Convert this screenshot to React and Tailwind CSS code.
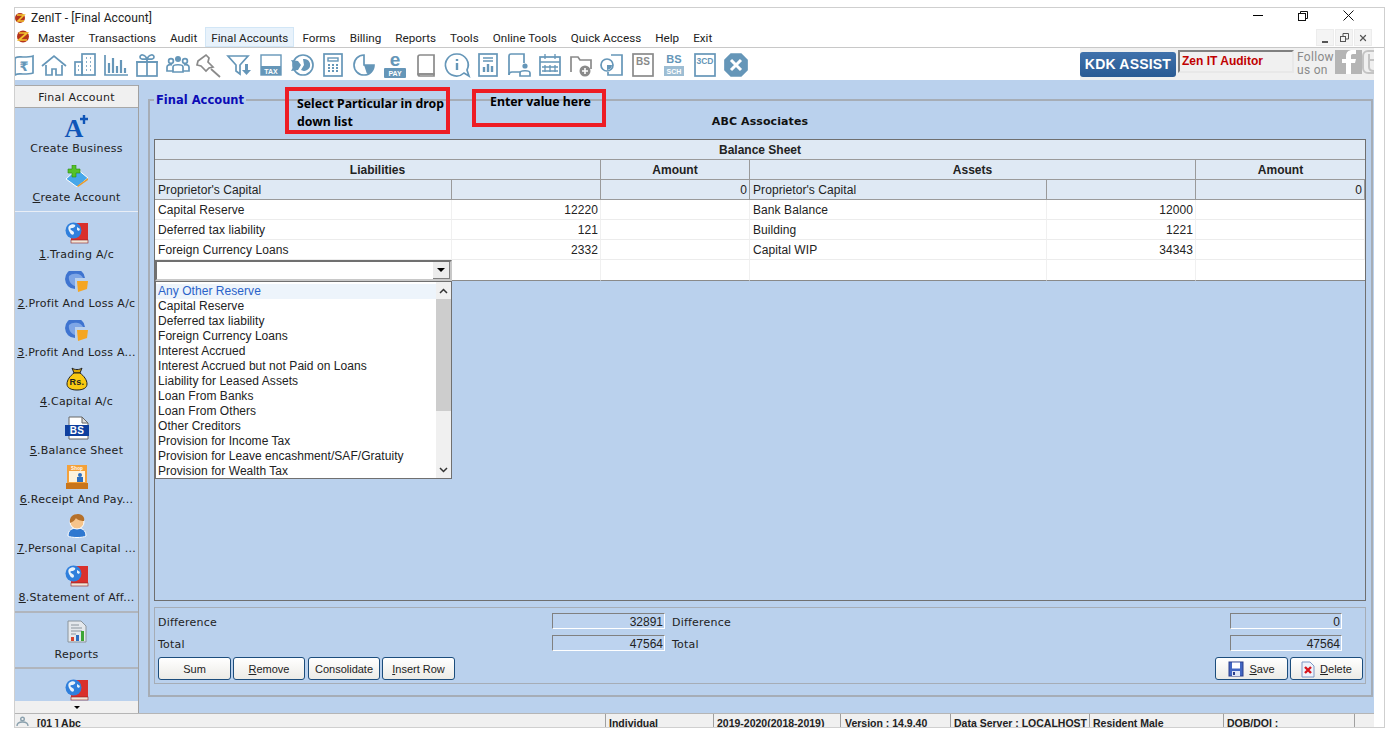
import { X } from "lucide-react";

const ICON = "#6596b8";
const GRAY = "#8a8a8a";

// toolbar icons, all drawn on a 28x28 box
function Tool({ children }) {
  return (
    <div className="w-[31px] h-[30px] flex items-center justify-center shrink-0">
      <svg className="overflow-visible" width="28" height="28" viewBox="0 0 28 28" fill="none" stroke={ICON} strokeWidth="1.700">
        {children}
      </svg>
    </div>
  );
}

const toolIcons = [
  <Tool key="note">
    <path d="M6 7c3-2 5-1 8-1s7 0 10-1v17c-3 1-7 1-10 1s-5-1-8 1z" />
    <text x="15" y="20" fontSize="13" fontWeight="700" textAnchor="middle" fill={ICON} stroke="none" fontFamily="DejaVu Sans">₹</text>
  </Tool>,
  <Tool key="home">
    <path d="M2 15 14 5l12 10" />
    <path d="M6 14v10h6v-6h4v6h6V14" />
  </Tool>,
  <Tool key="building">
    <rect x="11" y="3" width="13" height="21" />
    <rect x="4" y="11" width="7" height="13" />
    <path d="M15 7h1M19 7h1M15 11h1M19 11h1M15 15h1M19 15h1M15 19h1M19 19h1M7 15h1M7 19h1" />
  </Tool>,
  <Tool key="bars">
    <path d="M3 4v20h23" />
    <path d="M7 12v10M11 7v15M15 15v7M19 9v13M23 17v5" strokeWidth="2.200" />
  </Tool>,
  <Tool key="gift">
    <rect x="4" y="11" width="20" height="14" />
    <path d="M3 11h22M14 6v19" />
    <path d="M14 8c-2-5-7-5-7-2s4 2 7 2c3 0 7 1 7-2s-5-3-7 2z" />
  </Tool>,
  <Tool key="people">
    <circle cx="14" cy="8" r="3" fill={ICON} stroke="none" />
    <circle cx="7" cy="10" r="2.400" />
    <circle cx="21" cy="10" r="2.400" />
    <path d="M9 21v-5c0-3 10-3 10 0v5z" />
    <path d="M9 20H3v-4c0-2 3-3 5-2M19 20h6v-4c0-2-3-3-5-2" />
  </Tool>,
  <Tool key="pin">
    <g stroke={GRAY}>
      <path d="M3 10 11 4l3 3-1 4 5 5-4 1-3 3-5-5-4-1z" />
      <path d="m16 18 9 8" />
    </g>
  </Tool>,
  <Tool key="filter">
    <path d="M2 5h20l-8 9v9l-4-3v-6z" />
    <path d="M16 19h9l-4.500 5z" fill={ICON} stroke="none" />
    <path d="M20.500 13v7" strokeWidth="3" />
  </Tool>,
  <Tool key="tax">
    <rect x="4" y="4" width="20" height="20" strokeWidth="1.400" />
    <rect x="4" y="15" width="20" height="9" fill={ICON} stroke="none" />
    <text x="14" y="23" fontSize="7" fontWeight="700" textAnchor="middle" fill="#fff" stroke="none" fontFamily="Liberation Sans">TAX</text>
  </Tool>,
  <Tool key="piearrow">
    <circle cx="15" cy="14" r="10" />
    <path d="M3 9l7 1 3 4-3 5-7 1 3-5.500z" fill={ICON} stroke="none" />
    <path d="M15 8a6 6 0 1 1-2 11l3-5z" fill={ICON} stroke="none" />
  </Tool>,
  <Tool key="calc">
    <rect x="5" y="3" width="18" height="22" />
    <rect x="9" y="7" width="10" height="3" strokeWidth="1.400" />
    <path d="M9 14h2M13 14h2M17 14h2M9 17h2M13 17h2M17 17h2M9 20h2M13 20h2M17 20h2" strokeWidth="1.800" />
  </Tool>,
  <Tool key="pie">
    <path d="M14 4a10 10 0 1 0 10 10H14z" />
    <path d="M14 14h10A10 10 0 0 1 17 23z" fill={ICON} stroke="none" />
  </Tool>,
  <Tool key="epay">
    <text x="14" y="15" fontSize="19" fontWeight="700" textAnchor="middle" fill={ICON} stroke="none" fontFamily="Liberation Sans">e</text>
    <rect x="3" y="17" width="22" height="10" rx="1" fill={ICON} stroke="none" />
    <text x="14" y="25" fontSize="7" fontWeight="700" textAnchor="middle" fill="#fff" stroke="none" fontFamily="Liberation Sans">PAY</text>
  </Tool>,
  <Tool key="book">
    <g stroke={GRAY}>
      <path d="M6 23V6c0-1 1-2 2-2h14v19z" />
      <path d="M6 23c0 2 1 2 2 2h14v-2z" />
    </g>
  </Tool>,
  <Tool key="info">
    <path d="M14 3a11 11 0 1 0 7 19l5 3-2-6a11 11 0 0 0-10-16z" />
    <path d="M14 8v2M14 12v7" strokeWidth="2.400" />
  </Tool>,
  <Tool key="report">
    <rect x="5" y="3" width="18" height="22" />
    <path d="M9 7h10M9 10h10" strokeWidth="1.400" />
    <path d="M10 21v-5M14 21v-8M18 21v-6" strokeWidth="2.400" />
  </Tool>,
  <Tool key="bookuser">
    <path d="M4 24V5c0-1 1-2 2-2h13v9" />
    <path d="M4 24c0-3 2-3 3-3h8" />
    <circle cx="20" cy="15" r="2.600" fill={ICON} stroke="none" />
    <path d="M15 25v-3c0-3 10-3 10 0v3z" />
  </Tool>,
  <Tool key="calendar">
    <rect x="4" y="6" width="20" height="18" />
    <path d="M4 11h20M9 3v5M19 3v5M9 14v7M14 14v7M19 14v7M6 16h16M6 20h16" strokeWidth="1.300" />
  </Tool>,
  <Tool key="folder">
    <g stroke={GRAY}>
      <path d="M4 21V6h7l2 3h11v9" />
    </g>
    <circle cx="18" cy="20" r="5.500" fill={GRAY} stroke="none" />
    <path d="M18 17v6M15 20h6" stroke="#fff" strokeWidth="1.600" />
  </Tool>,
  <Tool key="docpie">
    <path d="M13 4h11v20H10v-3" />
    <circle cx="9" cy="14" r="6" />
    <path d="M9 14h5a5 5 0 0 1-5 5z" fill={ICON} stroke="none" />
  </Tool>,
  <Tool key="bs">
    <rect x="4" y="3" width="20" height="22" stroke={GRAY} />
    <text x="14" y="14" fontSize="10" fontWeight="700" textAnchor="middle" fill={GRAY} stroke="none" fontFamily="Liberation Sans">BS</text>
  </Tool>,
  <Tool key="bssch">
    <text x="14" y="12" fontSize="11" fontWeight="700" textAnchor="middle" fill={ICON} stroke="none" fontFamily="Liberation Sans">BS</text>
    <rect x="4" y="15" width="20" height="10" fill="#9dbdd3" stroke="none" />
    <text x="14" y="23" fontSize="7" fontWeight="700" textAnchor="middle" fill="#fff" stroke="none" fontFamily="Liberation Sans">SCH</text>
  </Tool>,
  <Tool key="tcd">
    <rect x="4" y="3" width="20" height="22" />
    <text x="14" y="13" fontSize="8.500" fontWeight="700" textAnchor="middle" fill={ICON} stroke="none" fontFamily="Liberation Sans">3CD</text>
  </Tool>,
  <Tool key="close">
    <path d="M9 3h10l6 6v10l-6 6H9l-6-6V9z" fill={ICON} stroke={ICON} />
    <path d="m9 9 10 10M19 9 9 19" stroke="#fff" strokeWidth="3" />
  </Tool>,
];

function GlobeBook() {
  return (
    <svg width="24" height="22" viewBox="0 0 24 22">
      <rect x="6" y="1" width="17" height="18" fill="#d9302c" />
      <rect x="6" y="18" width="17" height="3" fill="#f2e6d8" stroke="#8c2020" strokeWidth="0.600" />
      <circle cx="8.500" cy="8.500" r="8" fill="#2f7fdc" />
      <path d="M4 4c2-2 5-2 6-1s-1 3-3 3-2 1-1 2 3 1 3 3-2 2-3 1-4-6-2-8zM12 5l3 2-1 2-2-1z" fill="#e8f2fb" />
    </svg>
  );
}

function PieIcon() {
  return (
    <svg width="24" height="22" viewBox="0 0 24 22">
      <path d="M20 7A10 10 0 1 0 10 18V7z" fill="#3f74d0" />
      <path d="M4 5a8 6 0 0 1 14 2H10v8C6 14 3 9 4 5z" fill="#7ea6e6" />
      <path d="M12 10h11l-1 8-9 3z" fill="#f5a623" />
    </svg>
  );
}

function BagIcon() {
  return (
    <svg className="overflow-visible" width="24" height="24" viewBox="0 0 24 24">
      <path d="M7 1c2 2 8 2 10 0l-2 5H9z" fill="#e0a800" stroke="#222" />
      <path d="M9 6h6c4 3 7 7 7 11 0 4-4 6-10 6S2 21 2 17c0-4 3-8 7-11z" fill="#f9c913" stroke="#222" />
      <text x="12" y="18" fontSize="9" fontWeight="700" textAnchor="middle" fill="#222" fontFamily="Liberation Sans">Rs.</text>
    </svg>
  );
}

function BsIcon() {
  return (
    <svg className="overflow-visible" width="24" height="24" viewBox="0 0 24 24">
      <path d="M4 1h13l6 6v16H4z" fill="#fff" stroke="#666" />
      <path d="M17 1v6h6z" fill="#ddd" stroke="#666" />
      <rect x="0" y="9" width="24" height="11" fill="#0f3f9e" />
      <text x="12" y="18" fontSize="10" fontWeight="700" textAnchor="middle" fill="#fff" fontFamily="Liberation Sans">BS</text>
    </svg>
  );
}

function ShopIcon() {
  return (
    <svg className="overflow-visible" width="22" height="24" viewBox="0 0 22 24">
      <rect x="1" y="0" width="20" height="24" fill="#f4a13a" />
      <rect x="3" y="6" width="16" height="11" fill="#fdf2dc" />
      <rect x="0" y="18" width="22" height="6" fill="#c9751a" />
      <text x="11" y="4.500" fontSize="4.500" fontWeight="700" textAnchor="middle" fill="#fff" fontFamily="Liberation Sans">Shop</text>
      <circle cx="14" cy="10" r="2" fill="#2d6fc0" />
      <rect x="11" y="12" width="6" height="5" fill="#2d6fc0" />
    </svg>
  );
}

function UserIcon() {
  return (
    <svg width="20" height="24" viewBox="0 0 20 24">
      <path d="M1 22c0-6 4-8 9-8s9 2 9 8c-3 2-15 2-18 0z" fill="#2f78d0" stroke="#fff" />
      <circle cx="10" cy="8" r="7" fill="#f6c48b" stroke="#fff" />
      <path d="M3 9C2 3 6 0 11 0c5 0 7 4 6 7-3 0-7-1-8-3-1 2-3 4-6 5z" fill="#b5702a" />
    </svg>
  );
}

function BusinessIcon() {
  return (
    <svg className="overflow-visible" width="26" height="24" viewBox="0 0 26 24">
      <text x="10" y="23" fontSize="26" fontWeight="700" textAnchor="middle" fill="#0f55b8" fontFamily="Liberation Serif">A</text>
      <path d="M20 1v9M16 5h8" stroke="#0f55b8" strokeWidth="2.400" />
    </svg>
  );
}

function AccountIcon() {
  return (
    <svg width="24" height="22" viewBox="0 0 24 22">
      <path d="M1 14 12 4l11 9-11 9z" fill="#46a7ea" stroke="#fff" />
      <path d="M12 21 23 13v2l-10 7z" fill="#e89a2b" />
      <path d="M7 0h4v4h4v4h-4v4H7V8H3V4h4z" fill="#54c229" stroke="#2b8a12" strokeWidth="0.600" />
    </svg>
  );
}

function ReportIcon() {
  return (
    <svg width="20" height="23" viewBox="0 0 20 23">
      <path d="M1 1h13l5 5v16H1z" fill="#e4e8ec" stroke="#8a949c" />
      <path d="M4 5h8M4 8h11M4 11h11M4 14h5" stroke="#8a949c" />
      <rect x="4" y="17" width="3" height="4" fill="#d8442c" />
      <rect x="9" y="15" width="3" height="6" fill="#2d6fc0" />
      <rect x="14" y="11" width="3" height="10" fill="#3da535" />
    </svg>
  );
}

function SaveIcon() {
  return (
    <svg width="16" height="16" viewBox="0 0 16 16">
      <rect x="1" y="1" width="14" height="14" fill="#4266c2" stroke="#2b3f8c" />
      <rect x="4" y="1.500" width="8" height="6" fill="#fff" />
      <rect x="4" y="10" width="8" height="5" fill="#dfe6f5" />
      <rect x="5" y="11" width="2" height="3" fill="#2b3f8c" />
    </svg>
  );
}

function DeleteIcon() {
  return (
    <svg width="14" height="17" viewBox="0 0 14 17">
      <path d="M1 1h8l4 4v11H1z" fill="#eef3fb" stroke="#7f97c4" />
      <path d="m4 6 6 6M10 6l-6 6" stroke="#d8141c" strokeWidth="2.400" />
    </svg>
  );
}

const menus = ["Master", "Transactions", "Audit", "Final Accounts", "Forms", "Billing", "Reports", "Tools", "Online Tools", "Quick Access", "Help", "Exit"];

function Item({ icon, label, hotkey, rest }) {
  return (
    <div className="h-[49px] flex flex-col items-center justify-start shrink-0">
      <div className="h-[27px] flex items-end justify-center">{icon}</div>
      <div className="mt-[4px] leading-[14px] whitespace-nowrap">
        {hotkey && <span className="underline">{hotkey}</span>}
        {rest || label}
      </div>
    </div>
  );
}

const left = [
  ["Proprietor's Capital", "", "0"],
  ["Capital Reserve", "12220", ""],
  ["Deferred tax liability", "121", ""],
  ["Foreign Currency Loans", "2332", ""],
];
const right = [
  ["Proprietor's Capital", "", "0"],
  ["Bank Balance", "12000", ""],
  ["Building", "1221", ""],
  ["Capital WIP", "34343", ""],
];

const dropdown = [
  "Any Other Reserve",
  "Capital Reserve",
  "Deferred tax liability",
  "Foreign Currency Loans",
  "Interest Accrued",
  "Interest Accrued but not Paid on Loans",
  "Liability for Leased Assets",
  "Loan From Banks",
  "Loan From Others",
  "Other Creditors",
  "Provision for Income Tax",
  "Provision for Leave encashment/SAF/Gratuity",
  "Provision for Wealth Tax",
];

function Row({ cells, first }) {
  const bg = first ? "bg-[#dfe9f4] border-b-[#9a9a9a]" : "bg-white border-b-[#ececec]";
  return (
    <>
      {cells.map((c, i) => (
        <div
          key={i}
          className={`h-[20px] ${bg} border-b ${first ? "border-r border-r-[#9a9a9a]" : "border-r border-r-[#f0f0f0]"} pl-[3px] pr-[2px] leading-[21px] whitespace-nowrap tracking-[0.08px] ${i % 3 === 0 ? "" : "text-right"}`}
        >
          {c}
        </div>
      ))}
    </>
  );
}

function Btn({ children, className = "" }) {
  return (
    <button className={`h-[23px] pt-[1px] rounded-[3px] border border-[#1c4d7c] bg-gradient-to-b from-white to-[#ecebe6] flex items-center justify-center gap-[5px] text-[11px] text-[#222] font-['Liberation_Sans'] ${className}`}>
      {children}
    </button>
  );
}

function ValueBox({ children }) {
  return (
    <div className="h-[16px] border border-t-[#808080] border-l-[#808080] border-r-white border-b-white bg-[#bdd3ef] text-right pr-[1px] leading-[16px] text-[#222]">
      {children}
    </div>
  );
}

const totalLabel = "leading-[19px] font-['DejaVu_Sans'] text-[11px] tracking-[0.2px]";

export default function App() {
  return (
    <div className="w-[1399px] h-[735px] bg-white overflow-hidden pt-[7px] pl-[14px] text-black">
      <div className="w-[1371px] h-[721px] border border-[#cfcfcf] flex flex-col overflow-hidden">
        {/* title bar */}
        <div className="h-[19px] shrink-0 flex items-center relative font-['Roboto'] text-[12px] text-[#222]">
          <svg width="11" height="12" viewBox="0 0 11 12">
            <circle cx="5" cy="6" r="5" fill="#b5341c" />
            <path d="M2 3h7L3 9h6" stroke="#f4c430" strokeWidth="1.500" fill="none" />
          </svg>
          <span className="ml-[5px] tracking-[0.1px]">ZenIT - [Final Account]</span>
          <div className="absolute left-[1238px] top-0 h-[15px] flex items-center">
            <div className="w-[10px] h-[1px] bg-black" />
            <svg className="ml-[35px]" width="10" height="10" viewBox="0 0 10 10" fill="none" stroke="#111">
              <rect x="0.500" y="2.500" width="7" height="7" />
              <path d="M2.500 2.500v-2h7v7h-2" />
            </svg>
            <svg className="ml-[35px]" width="11" height="11" viewBox="0 0 11 11" stroke="#111"><path d="m.500.500 10 10M10.500.500l-10 10" /></svg>
          </div>
        </div>

        {/* menu bar */}
        <div className="h-[21px] shrink-0 border-b border-[#c8c8c8] flex items-stretch relative font-['Roboto'] text-[11.7px] text-[#222]">
          <svg className="mt-[3px] ml-[1px]" width="14" height="13" viewBox="0 0 14 13">
            <circle cx="7" cy="6.500" r="6" fill="#b5341c" />
            <path d="M3 3h8L3 10h8" stroke="#f4c430" strokeWidth="1.700" fill="none" />
          </svg>
          <div className="ml-[2px] flex">
            {menus.map((m) => (
              <div
                key={m}
                className={`px-[5px] mr-[2px] leading-[20px] border ${m === "Final Accounts" ? "bg-[#e8f2fb] border-[#d2e6f6]" : "border-transparent"}`}
              >
                {m}
              </div>
            ))}
          </div>
          <div className="absolute left-[1301px] top-[2px] flex gap-[1px] text-[#444]">
            <div className="w-[18px] h-[17px] bg-[#f4f4f4] border border-[#ececec] flex items-end justify-center pb-[2px]"><div className="w-[6px] h-[2px] bg-[#555]" /></div>
            <div className="w-[18px] h-[17px] bg-[#f4f4f4] border border-[#ececec] flex items-center justify-center">
              <svg width="9" height="9" viewBox="0 0 9 9" fill="none" stroke="#555"><rect x="0.500" y="3.500" width="5" height="5" /><path d="M3 3V.500h5.500V6H6" /></svg>
            </div>
            <div className="w-[18px] h-[17px] bg-[#f4f4f4] border border-[#ececec] flex items-center justify-center"><X size={10} strokeWidth={3} className="text-[#555]" /></div>
          </div>
        </div>

        {/* toolbar */}
        <div className="h-[32px] shrink-0 flex items-center relative bg-white pt-[2px]">
          <div className="flex -ml-[8px]">{toolIcons}</div>
          <div className="absolute left-[1065px] top-0 h-[32px] w-[294px] bg-[#f0f0f0] flex items-start">
            <div className="mt-[4px] w-[96px] h-[25px] rounded-[3px] bg-gradient-to-b from-[#3f71ab] to-[#2a5b94] text-white font-['Liberation_Sans'] font-bold text-[14px] tracking-[0.2px] leading-[25px] text-center whitespace-nowrap">
              KDK ASSIST
            </div>
            <div className="ml-[2px] mt-[2px] w-[116px] h-[23px] border-2 border-t-[#808080] border-l-[#808080] border-r-[#e8e8e8] border-b-[#e8e8e8] bg-[#f0f0f0] pl-[2px] text-[#c00000] font-['Liberation_Sans'] font-bold text-[12px] leading-[19px] whitespace-nowrap">
              Zen IT Auditor
            </div>
            <div className="ml-[3px] mt-[3px] w-[37px] text-[#8a8a8a] font-['Roboto'] text-[12px] leading-[13px] tracking-[0.3px]">
              Follow us on
            </div>
            <div className="ml-[1px] mt-[2px] w-[27px] h-[24px] bg-[#b5b5b5] shrink-0">
              <svg width="27" height="24" viewBox="0 0 27 24" fill="#fff"><path d="M11 24V13H7V9h4V6c0-4 3-6 6-6h4v4h-3c-2 0-2 1-2 2v3h5l-1 4h-4v11z" /></svg>
            </div>
            <div className="mt-[2px] w-[12px] h-[24px] shrink-0 overflow-hidden">
              <svg width="12" height="24" viewBox="0 0 12 24" fill="none" stroke="#c4c4c4" strokeWidth="2"><rect x="1" y="1" width="22" height="22" rx="5" /><path d="M7 4v13c0 3 2 4 5 4M7 10h5" /></svg>
            </div>
          </div>
        </div>

        {/* main area */}
        <div className="w-[1359px] h-[633px] shrink-0 bg-[#bad1ed] flex items-start overflow-hidden relative">
          {/* sidebar */}
          <div className="w-[124px] h-[628px] mt-[5px] border-r border-[#a0a0a0] flex flex-col items-stretch text-center shrink-0 font-['DejaVu_Sans'] text-[11px] tracking-[0.25px] text-[#222]">
            <div className="h-[23px] shrink-0 bg-[#f0f0f0] border-y border-[#a8a8a8] leading-[24px]">Final Account</div>
            <div className="h-[104px] shrink-0 border-b border-b-[#e9eef6] pt-[3px] flex flex-col">
              <Item icon={<BusinessIcon />} label="Create Business" />
              <Item icon={<AccountIcon />} hotkey="C" rest="reate Account" />
            </div>
            <div className="pt-[5px] flex flex-col">
              <Item icon={<GlobeBook />} hotkey="1" rest=".Trading A/c" />
              <Item icon={<PieIcon />} hotkey="2" rest=".Profit And Loss A/c" />
              <Item icon={<PieIcon />} hotkey="3" rest=".Profit And Loss A..." />
              <Item icon={<BagIcon />} hotkey="4" rest=".Capital A/c" />
              <Item icon={<BsIcon />} hotkey="5" rest=".Balance Sheet" />
              <Item icon={<ShopIcon />} hotkey="6" rest=".Receipt And Pay..." />
              <Item icon={<UserIcon />} hotkey="7" rest=".Personal Capital ..." />
              <Item icon={<GlobeBook />} hotkey="8" rest=".Statement of Aff..." />
            </div>
            <div className="h-[58px] shrink-0 border-y-2 border-y-[#b0b5bd] mt-[2px] flex flex-col items-center pt-[7px]">
              <ReportIcon />
              <div className="mt-[5px] leading-[14px]">Reports</div>
            </div>
            <div className="h-[32px] shrink-0 flex items-end justify-center overflow-hidden"><GlobeBook /></div>
            <div className="h-[12px] shrink-0 bg-[#f0f0f0] flex items-center justify-center">
              <div className="w-0 h-0 border-x-[3px] border-x-transparent border-t-[3px] border-t-black" />
            </div>
          </div>

          {/* final account panel */}
          <div className="ml-[9px] mt-[19px] w-[1225px] h-[598px] border-2 border-[#a6adb6] relative pl-[4px] pr-[5px] font-['Liberation_Sans'] text-[12px] text-[#222] flex flex-col shrink-0">
            <div className="absolute left-[4px] -top-[8px] bg-[#bad1ed] px-[2px] font-['DejaVu_Sans'] font-bold text-[11.5px] leading-[14px] text-[#0b0bb5]">
              Final Account
            </div>
            <div className="h-[38px] shrink-0 text-center pt-[14px] font-['DejaVu_Sans'] font-bold text-[11px] tracking-[0.1px] leading-[14px] text-[#111]">ABC Associates</div>

            {/* balance sheet */}
            <div className="h-[462px] shrink-0 border border-[#6f6f6f] relative">
              <div className="h-[20px] bg-[#dfe9f4] border-b border-[#9a9a9a] text-center font-bold leading-[21px]">Balance Sheet</div>
              <div className="grid grid-cols-[446px_149px_446px_169px] h-[20px] bg-[#dfe9f4] border-b border-[#9a9a9a] text-center font-bold leading-[21px]">
                <div className="border-r border-[#9a9a9a]">Liabilities</div>
                <div className="border-r border-[#9a9a9a]">Amount</div>
                <div className="border-r border-[#9a9a9a]">Assets</div>
                <div>Amount</div>
              </div>
              <div className="grid grid-cols-[297px_149px_149px_297px_149px_169px]">
                {left.map((l, i) => (
                  <Row key={i} cells={[...l, ...right[i]]} first={i === 0} />
                ))}
                <div className="h-[21px] bg-white border-b border-[#8a8a8a]" />
                <div className="h-[21px] bg-white border-b border-r border-b-[#8a8a8a] border-r-[#f0f0f0]" />
                <div className="h-[21px] bg-white border-b border-r border-b-[#8a8a8a] border-r-[#f0f0f0]" />
                <div className="h-[21px] bg-white border-b border-r border-b-[#8a8a8a] border-r-[#f0f0f0]" />
                <div className="h-[21px] bg-white border-b border-r border-b-[#8a8a8a] border-r-[#f0f0f0]" />
                <div className="h-[21px] bg-white border-b border-b-[#8a8a8a]" />
              </div>

              {/* open combo box */}
              <div className="absolute left-0 top-[120px] w-[297px] h-[21px] bg-white border-2 border-[#707070] border-r-[#c8c8c8] border-b-[#c8c8c8] flex justify-end">
                <div className="w-[17px] h-[17px] bg-[#ececec] border-r border-b border-[#808080] flex items-center justify-center">
                  <div className="w-0 h-0 border-x-[4px] border-x-transparent border-t-[4px] border-t-black" />
                </div>
              </div>
              <div className="absolute left-0 top-[141px] w-[297px] h-[198px] bg-white border border-[#707070] flex overflow-hidden">
                <div className="flex-1 pt-[2px] tracking-[0.05px]">
                  {dropdown.map((d, i) => (
                    <div key={d} className={`h-[15px] pl-[2px] leading-[15px] whitespace-nowrap ${i === 0 ? "bg-[#edf4fb] text-[#2a62c9]" : ""}`}>{d}</div>
                  ))}
                </div>
                <div className="w-[15px] bg-[#f0f0f0] flex flex-col items-center">
                  <div className="h-[17px] flex items-center">
                    <svg width="9" height="6" viewBox="0 0 9 6" fill="none" stroke="#333" strokeWidth="1.500"><path d="m1 5 3.500-3.500L8 5" /></svg>
                  </div>
                  <div className="w-[15px] h-[112px] bg-[#cdcdcd]" />
                  <div className="flex-1" />
                  <div className="h-[17px] flex items-center">
                    <svg width="9" height="6" viewBox="0 0 9 6" fill="none" stroke="#333" strokeWidth="1.500"><path d="m1 1 3.500 3.500L8 1" /></svg>
                  </div>
                </div>
              </div>
            </div>

            {/* totals */}
            <div className="mt-[6px] h-[77px] shrink-0 border border-[#a6adb6] pl-[3px] pt-[5px] grid grid-cols-[394px_113px_7px_558px_112px] grid-rows-[16px_16px] gap-y-[6px]">
              <div className={totalLabel}>Difference</div>
              <ValueBox>32891</ValueBox>
              <div />
              <div className={totalLabel}>Difference</div>
              <ValueBox>0</ValueBox>
              <div className={totalLabel}>Total</div>
              <ValueBox>47564</ValueBox>
              <div />
              <div className={totalLabel}>Total</div>
              <ValueBox>47564</ValueBox>
              <div className="col-span-5 h-[23px] flex w-[1205px]">
                <Btn className="w-[73px]">Sum</Btn>
                <Btn className="ml-[2px] w-[72px]"><span><span className="underline">R</span>emove</span></Btn>
                <Btn className="ml-[3px] w-[72px]">Consolidate</Btn>
                <Btn className="ml-[2px] w-[73px]"><span><span className="underline">I</span>nsert Row</span></Btn>
                <Btn className="ml-auto w-[73px]"><SaveIcon /><span><span className="underline">S</span>ave</span></Btn>
                <Btn className="ml-[2px] w-[73px]"><DeleteIcon /><span><span className="underline">D</span>elete</span></Btn>
              </div>
            </div>
          </div>
        </div>

        {/* status bar */}
        <div className="h-[14px] shrink-0 w-[1359px] bg-[#f0f0f0] border-t border-[#b5b5b5] flex overflow-hidden font-['Liberation_Sans'] font-bold text-[10.5px] leading-[19px] text-[#222]">
          <div className="w-[590px] flex items-start">
            <svg className="mt-[2px] ml-[1px]" width="13" height="12" viewBox="0 0 13 12" fill="none" stroke="#8aa0ad" strokeWidth="1.400">
              <circle cx="6.500" cy="3" r="1.800" />
              <path d="M1 10c0-3 2-4 5.500-4S12 7 12 10" />
            </svg>
            <span className="ml-[8px]">[01 ] Abc</span>
          </div>
          <div className="w-[108px] border-l border-l-[#a0a0a0] pl-[3px]">Individual</div>
          <div className="w-[127px] border-l border-l-[#a0a0a0] pl-[3px] whitespace-nowrap">2019-2020(2018-2019)</div>
          <div className="w-[110px] border-l border-l-[#a0a0a0] pl-[4px] whitespace-nowrap">Version : 14.9.40</div>
          <div className="w-[139px] border-l border-l-[#a0a0a0] pl-[3px] whitespace-nowrap">Data Server : LOCALHOST</div>
          <div className="w-[134px] border-l border-l-[#a0a0a0] pl-[3px] whitespace-nowrap">Resident Male</div>
          <div className="w-[132px] border-x border-x-[#a0a0a0] pl-[3px] whitespace-nowrap">DOB/DOI :</div>
        </div>
      </div>

      {/* red call-outs added on top of the screen */}
      <div className="absolute left-[285px] top-[87px] w-[165px] h-[47px] border-[4px] border-[#ed1c24] pl-[8px] pt-[4px] font-['Noto_Sans'] font-bold text-[12.3px] leading-[18px] text-black">
        Select Particular in drop down list
      </div>
      <div className="absolute left-[472px] top-[89px] w-[134px] h-[38px] border-[4px] border-[#ed1c24] pl-[14px] font-['Noto_Sans'] font-bold text-[12.3px] leading-[18px] text-black">
        Enter value here
      </div>
    </div>
  );
}
